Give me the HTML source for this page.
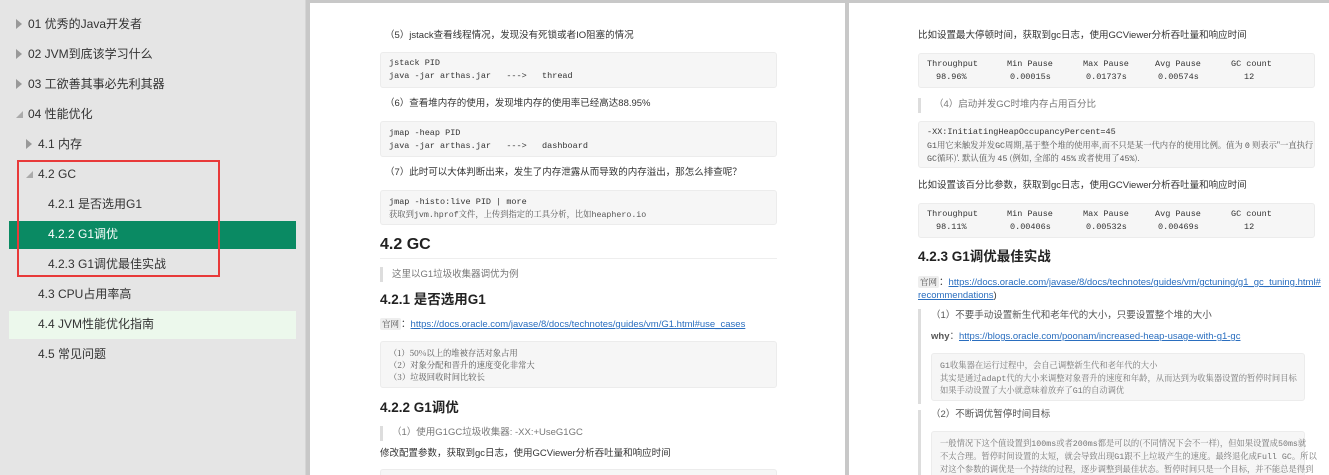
<!DOCTYPE html>
<html><head><meta charset="utf-8">
<style>
*{margin:0;padding:0;box-sizing:border-box}
body{width:1329px;height:475px;overflow:hidden;background:#c8c8c8;font-family:"Liberation Sans","Noto Sans CJK SC",sans-serif;position:relative}
.a{position:absolute;white-space:nowrap;line-height:14px}
#side{position:absolute;left:0;top:0;width:306px;height:475px;background:#e5e5e5;border-right:1px solid #d6d6d6}
.si{position:absolute;font-size:12px;color:#333;line-height:16px}
.tri{position:absolute;width:0;height:0}
.tr{border-left:6px solid #999;border-top:5px solid transparent;border-bottom:5px solid transparent}
.td{border-right:7px solid #aaa;border-top:7px solid transparent}
.pg{position:absolute;top:3px;background:#fff;height:472px;overflow:hidden}
.t{font-size:9.5px;color:#333}
.q{font-size:9.5px;color:#777}
.code{position:absolute;background:#f6f6f6;border:1px solid #ececec;border-radius:3px}
.m{font-family:"Liberation Mono","Noto Sans CJK SC",monospace;font-size:8.5px;color:#333}
.mc{font-family:"Noto Serif CJK SC","Liberation Mono",serif;font-size:8.3px;color:#555}
.mc .m{font-size:8.3px;color:inherit}
.bar{position:absolute;width:3px;background:#ddd}
.h2{font-size:16px;font-weight:bold;color:#222;line-height:20px}
.h3{font-size:13.5px;font-weight:bold;color:#222;line-height:18px}
.lk{color:#2a6ebf;text-decoration:underline}
.gw{font-family:"Noto Serif CJK SC",serif;font-size:8.5px;background:#eee;color:#555;padding:0 2px;border-radius:2px}
</style></head><body>
<div id="side">
<div class="tri tr" style="left:16px;top:19px"></div><div class="si" style="left:28px;top:16px">01 优秀的Java开发者</div>
<div class="tri tr" style="left:16px;top:49px"></div><div class="si" style="left:28px;top:46px">02 JVM到底该学习什么</div>
<div class="tri tr" style="left:16px;top:79px"></div><div class="si" style="left:28px;top:76px">03 工欲善其事必先利其器</div>
<div class="tri td" style="left:16px;top:111px"></div><div class="si" style="left:28px;top:106px">04 性能优化</div>
<div class="tri tr" style="left:26px;top:139px"></div><div class="si" style="left:38px;top:136px">4.1 内存</div>
<div class="tri td" style="left:26px;top:171px"></div><div class="si" style="left:38px;top:166px">4.2 GC</div>
<div class="si" style="left:48px;top:196px">4.2.1 是否选用G1</div>
<div style="position:absolute;left:9px;top:221px;width:287px;height:28px;background:#0a8a63"></div>
<div class="si" style="left:48px;top:226px;color:#fff">4.2.2 G1调优</div>
<div class="si" style="left:48px;top:256px">4.2.3 G1调优最佳实战</div>
<div style="position:absolute;left:17px;top:160px;width:203px;height:117px;border:2px solid #e83a3a"></div>
<div class="si" style="left:38px;top:286px">4.3 CPU占用率高</div>
<div style="position:absolute;left:9px;top:311px;width:287px;height:28px;background:#ecf8ec"></div>
<div class="si" style="left:38px;top:316px">4.4 JVM性能优化指南</div>
<div class="si" style="left:38px;top:346px">4.5 常见问题</div>
</div>

<div class="pg" style="left:310px;width:535px">
<div class="a t" style="left:75px;top:26px">（5）jstack查看线程情况，发现没有死锁或者IO阻塞的情况</div>
<div class="code" style="left:70px;top:49px;width:397px;height:36px"></div>
<div class="a m" style="left:79px;top:53px">jstack PID</div>
<div class="a m" style="left:79px;top:66px">java -jar arthas.jar &nbsp;&nbsp;---&gt; &nbsp;&nbsp;thread</div>
<div class="a t" style="left:75px;top:94px">（6）查看堆内存的使用，发现堆内存的使用率已经高达88.95%</div>
<div class="code" style="left:70px;top:118px;width:397px;height:36px"></div>
<div class="a m" style="left:79px;top:123px">jmap -heap PID</div>
<div class="a m" style="left:79px;top:136px">java -jar arthas.jar &nbsp;&nbsp;---&gt; &nbsp;&nbsp;dashboard</div>
<div class="a t" style="left:75px;top:163px">（7）此时可以大体判断出来，发生了内存泄露从而导致的内存溢出，那怎么排查呢？</div>
<div class="code" style="left:70px;top:187px;width:397px;height:35px"></div>
<div class="a m" style="left:79px;top:192px">jmap -histo:live PID | more</div>
<div class="a mc" style="left:79px;top:204px">获取到<span class="m">jvm.hprof</span>文件，上传到指定的工具分析，比如<span class="m">heaphero.io</span></div>
<div class="a h2" style="left:70px;top:232px">4.2 GC</div>
<div style="position:absolute;left:70px;top:255px;width:397px;height:1px;background:#eee"></div>
<div class="bar" style="left:70px;top:264px;height:15px"></div>
<div class="a q" style="left:82px;top:265px">这里以G1垃圾收集器调优为例</div>
<div class="a h3" style="left:70px;top:288px">4.2.1 是否选用G1</div>
<div class="a t" style="left:70px;top:314px"><span class="gw">官网</span>：<span class="lk">https://docs.oracle.com/javase/8/docs/technotes/guides/vm/G1.html#use_cases</span></div>
<div class="code" style="left:70px;top:338px;width:397px;height:47px"></div>
<div class="a mc" style="left:79px;top:343px">（1）50%以上的堆被存活对象占用</div>
<div class="a mc" style="left:79px;top:355px">（2）对象分配和晋升的速度变化非常大</div>
<div class="a mc" style="left:79px;top:367px">（3）垃圾回收时间比较长</div>
<div class="a h3" style="left:70px;top:396px">4.2.2 G1调优</div>
<div class="bar" style="left:70px;top:423px;height:15px"></div>
<div class="a q" style="left:82px;top:423px">（1）使用G1GC垃圾收集器: -XX:+UseG1GC</div>
<div class="a t" style="left:70px;top:444px">修改配置参数，获取到gc日志，使用GCViewer分析吞吐量和响应时间</div>
<div class="code" style="left:70px;top:466px;width:397px;height:20px"></div>
</div>

<div class="pg" style="left:849px;width:480px">
<div class="a t" style="left:69px;top:26px">比如设置最大停顿时间，获取到gc日志，使用GCViewer分析吞吐量和响应时间</div>
<div class="code" style="left:69px;top:50px;width:397px;height:35px"></div>
<div class="a m" style="left:78px;top:54px">Throughput</div><div class="a m" style="left:158px;top:54px">Min Pause</div><div class="a m" style="left:234px;top:54px">Max Pause</div><div class="a m" style="left:306px;top:54px">Avg Pause</div><div class="a m" style="left:382px;top:54px">GC count</div>
<div class="a m" style="left:87px;top:67px">98.96%</div><div class="a m" style="left:161px;top:67px">0.00015s</div><div class="a m" style="left:237px;top:67px">0.01737s</div><div class="a m" style="left:309px;top:67px">0.00574s</div><div class="a m" style="left:395px;top:67px">12</div>
<div class="bar" style="left:69px;top:95px;height:15px"></div>
<div class="a q" style="left:85px;top:95px">（4）启动并发GC时堆内存占用百分比</div>
<div class="code" style="left:69px;top:118px;width:397px;height:47px"></div>
<div class="a m" style="left:78px;top:122px">-XX:InitiatingHeapOccupancyPercent=45</div>
<div class="a mc" style="left:78px;top:135px"><span class="m">G1</span>用它来触发并发<span class="m">GC</span>周期,基于整个堆的使用率,而不只是某一代内存的使用比例。值为 <span class="m">0</span> 则表示"一直执行</div>
<div class="a mc" style="left:78px;top:148px"><span class="m">GC</span>循环)'. 默认值为 <span class="m">45</span> (例如, 全部的 <span class="m">45%</span> 或者使用了<span class="m">45%</span>).</div>
<div class="a t" style="left:69px;top:176px">比如设置该百分比参数，获取到gc日志，使用GCViewer分析吞吐量和响应时间</div>
<div class="code" style="left:69px;top:200px;width:397px;height:35px"></div>
<div class="a m" style="left:78px;top:204px">Throughput</div><div class="a m" style="left:158px;top:204px">Min Pause</div><div class="a m" style="left:234px;top:204px">Max Pause</div><div class="a m" style="left:306px;top:204px">Avg Pause</div><div class="a m" style="left:382px;top:204px">GC count</div>
<div class="a m" style="left:87px;top:217px">98.11%</div><div class="a m" style="left:161px;top:217px">0.00406s</div><div class="a m" style="left:237px;top:217px">0.00532s</div><div class="a m" style="left:309px;top:217px">0.00469s</div><div class="a m" style="left:395px;top:217px">12</div>
<div class="a h3" style="left:69px;top:245px">4.2.3 G1调优最佳实战</div>
<div class="a t" style="left:69px;top:272px"><span class="gw">官网</span>：<span class="lk">https://docs.oracle.com/javase/8/docs/technotes/guides/vm/gctuning/g1_gc_tuning.html#</span></div>
<div class="a t" style="left:69px;top:286px"><span class="lk">recommendations</span>)</div>
<div class="bar" style="left:69px;top:306px;height:95px"></div>
<div class="a t" style="left:82px;top:306px;color:#555">（1）不要手动设置新生代和老年代的大小，只要设置整个堆的大小</div>
<div class="a t" style="left:82px;top:327px;color:#555"><b>why</b>：<span class="lk">https://blogs.oracle.com/poonam/increased-heap-usage-with-g1-gc</span></div>
<div class="code" style="left:82px;top:350px;width:374px;height:48px"></div>
<div class="a mc" style="left:91px;top:355px;color:#777"><span class="m">G1</span>收集器在运行过程中，会自己调整新生代和老年代的大小</div>
<div class="a mc" style="left:91px;top:368px;color:#777">其实是通过<span class="m">adapt</span>代的大小来调整对象晋升的速度和年龄，从而达到为收集器设置的暂停时间目标</div>
<div class="a mc" style="left:91px;top:380px;color:#777">如果手动设置了大小就意味着放弃了<span class="m">G1</span>的自动调优</div>
<div class="bar" style="left:69px;top:407px;height:70px"></div>
<div class="a t" style="left:82px;top:405px;color:#555">（2）不断调优暂停时间目标</div>
<div class="code" style="left:82px;top:428px;width:374px;height:50px"></div>
<div class="a mc" style="left:91px;top:433px;color:#777">一般情况下这个值设置到<span class="m">100ms</span>或者<span class="m">200ms</span>都是可以的(不同情况下会不一样)，但如果设置成<span class="m">50ms</span>就</div>
<div class="a mc" style="left:91px;top:446px;color:#777">不太合理。暂停时间设置的太短，就会导致出现<span class="m">G1</span>跟不上垃圾产生的速度。最终退化成<span class="m">Full GC</span>。所以</div>
<div class="a mc" style="left:91px;top:459px;color:#777">对这个参数的调优是一个持续的过程，逐步调整到最佳状态。暂停时间只是一个目标，并不能总是得到</div>
</div>
</body></html>
